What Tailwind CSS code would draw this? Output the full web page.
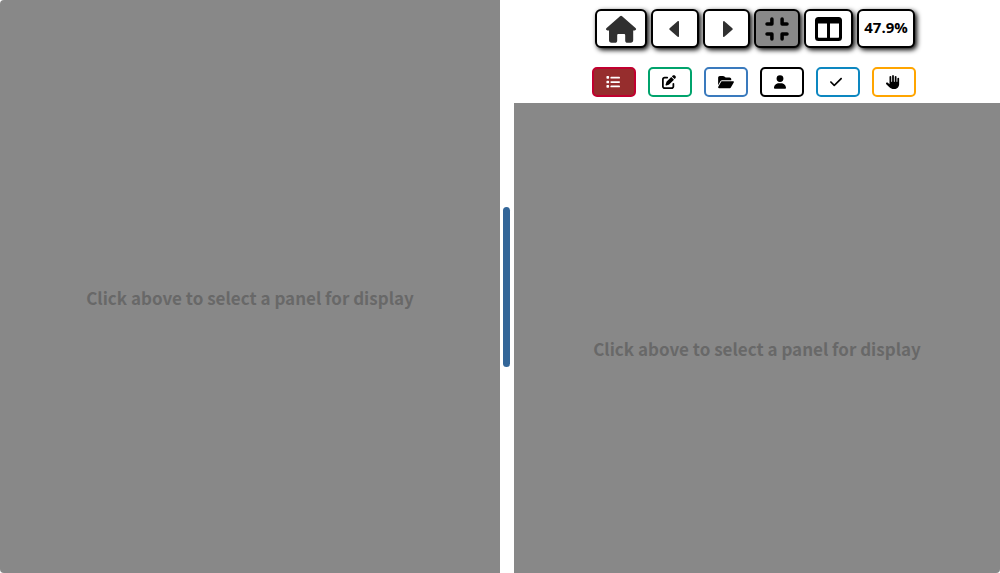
<!DOCTYPE html>
<html lang="en">
<head>
<meta charset="utf-8">
<meta name="viewport" content="width=device-width, initial-scale=1">
<title>Panels</title>
<script src="https://cdn.jsdelivr.net/npm/@tailwindcss/browser@4"></script>
</head>
<body class="h-screen overflow-hidden bg-white font-['Noto_Sans_CJK_SC',sans-serif] text-black">
<div class="flex h-full overflow-hidden rounded">
  <section class="flex w-1/2 shrink-0 items-center justify-center bg-[#888888] pt-[22px]">
    <p class="text-[17px] leading-6 font-bold text-[#686868]">Click above to select a panel for display</p>
  </section>
  <div role="separator" aria-orientation="vertical" aria-label="Resize panels" class="flex w-3.5 shrink-0 cursor-col-resize items-center justify-center bg-white pr-px">
    <div class="h-40 w-[7px] rounded-full bg-[#336699]"></div>
  </div>
  <main class="flex min-w-0 flex-1 flex-col">
    <header class="flex flex-col items-center gap-[19px] pt-[9px] pb-1.5">
      <nav aria-label="Navigation" class="flex h-[39px] gap-1 pr-1">
        <button aria-label="Home" class="flex w-[52px] items-center justify-center rounded-md border-2 border-black bg-white shadow-[2px_2px_5px_black]">
          <svg class="h-7 w-8" viewBox="0 0 32 28" fill="#303030"><path d="M15 1.200a1.600 1.600 0 0 1 2.100 0l13.400 11.900c1.200 1 .6 2.300-.8 2.300h-1.500V25c0 1.800-.9 2.700-2.600 2.700h-3.100c-1.500 0-2.300-.8-2.300-2.300v-4.900c0-.9-.5-1.400-1.400-1.400h-5.200c-.9 0-1.400.5-1.400 1.400v4.900c0 1.500-.8 2.300-2.300 2.300H6.600C4.900 27.700 4 26.800 4 25v-9.600H2.400C1 15.400.4 14.100 1.600 13.100Z"/></svg>
        </button>
        <button aria-label="Previous" class="flex w-12 items-center justify-center rounded-md border-2 border-black bg-white pr-1 shadow-[2px_2px_5px_black]">
          <svg class="h-5 w-[11px]" viewBox="0 0 12 20" fill="#303030"><path d="M10.200 1.700C11 1 12 1.400 12 2.500v15c0 1.100-1 1.500-1.800.8L1.800 10.900c-.6-.6-.6-1.200 0-1.800Z"/></svg>
        </button>
        <button aria-label="Next" class="flex w-[47px] items-center justify-center rounded-md border-2 border-black bg-white pl-1 shadow-[2px_2px_5px_black]">
          <svg class="h-5 w-[11px]" viewBox="0 0 12 20" fill="#303030"><path d="M1.800 1.700C1 1 0 1.400 0 2.500v15c0 1.100 1 1.500 1.800.8l8.400-7.400c.6-.6.6-1.200 0-1.800Z"/></svg>
        </button>
        <button aria-label="Exit full screen" aria-pressed="true" class="flex w-[46px] items-center justify-center rounded-md border-2 border-black bg-[#888888] shadow-[2px_2px_5px_black]">
          <svg class="size-6" viewBox="0 0 24 24" fill="none" stroke="#000" stroke-width="3.500" stroke-linecap="round" stroke-linejoin="round"><path d="M2 6.900h4.900V2M17.100 2v4.900H22M2 17.100h4.900V22M17.100 22v-4.900H22"/></svg>
        </button>
        <button aria-label="Split view" class="flex w-[49px] items-center justify-center rounded-md border-2 border-black bg-white shadow-[2px_2px_5px_black]">
          <svg class="h-6 w-[27px]" viewBox="0 0 27 24"><path fill="#000" fill-rule="evenodd" d="M3.500 0h20A3.500 3.500 0 0 1 27 3.500v17a3.500 3.500 0 0 1-3.500 3.500h-20A3.500 3.500 0 0 1 0 20.500v-17A3.500 3.500 0 0 1 3.500 0ZM3 6.500V20a.7.7 0 0 0 .7.700h8.300V6.500ZM15 6.500v14.200h8.300a.7.7 0 0 0 .7-.7V6.500Z"/></svg>
        </button>
        <button class="flex w-[58px] items-center justify-center rounded-md border-2 border-black bg-white pb-0.5 font-['Open_Sans',sans-serif] text-[15px] font-bold shadow-[2px_2px_5px_black]">47.9%</button>
      </nav>
      <nav aria-label="Panels" class="flex h-[30px] gap-3 pr-1.5">
        <button aria-label="Contents" aria-pressed="true" class="flex w-11 items-center justify-center rounded-[5px] border-2 border-[#c1002f] bg-[#962d2d] pr-0.5">
          <svg class="size-3.5" viewBox="0 0 512 512" fill="#fff"><path d="M24 40h64a24 24 0 0 1 24 24v48a24 24 0 0 1-24 24H40a24 24 0 0 1-24-24V64a24 24 0 0 1 24-24ZM192 64h288a32 32 0 0 1 0 64H192a32 32 0 0 1 0-64ZM192 224h288a32 32 0 0 1 0 64H192a32 32 0 0 1 0-64ZM192 384h288a32 32 0 0 1 0 64H192a32 32 0 0 1 0-64ZM40 208h48a24 24 0 0 1 24 24v48a24 24 0 0 1-24 24H40a24 24 0 0 1-24-24v-48a24 24 0 0 1 24-24ZM40 368h48a24 24 0 0 1 24 24v48a24 24 0 0 1-24 24H40a24 24 0 0 1-24-24v-48a24 24 0 0 1 24-24Z"/></svg>
        </button>
        <button aria-label="Edit" class="flex w-11 items-center justify-center rounded-[5px] border-2 border-[#00a36c] bg-white pr-0.5">
          <svg class="size-3.5" viewBox="0 0 512 512"><path d="M471.600 21.700c-21.900-21.900-57.300-21.900-79.200 0L362.300 51.700l97.900 97.900 30.100-30.100c21.900-21.900 21.900-57.300 0-79.200L471.600 21.700zm-299.200 220c-6.100 6.100-10.800 13.600-13.500 21.900l-29.600 88.800c-2.900 8.600-.6 18.100 5.800 24.600s15.900 8.700 24.600 5.800l88.800-29.600c8.200-2.700 15.700-7.400 21.900-13.500L437.700 172.300 339.700 74.300 172.400 241.700zM96 64C43 64 0 107 0 160V416c0 53 43 96 96 96H352c53 0 96-43 96-96V320c0-17.700-14.300-32-32-32s-32 14.300-32 32v96c0 17.700-14.300 32-32 32H96c-17.700 0-32-14.300-32-32V160c0-17.700 14.300-32 32-32h96c17.700 0 32-14.300 32-32s-14.300-32-32-32H96z"/></svg>
        </button>
        <button aria-label="Open" class="flex w-11 items-center justify-center rounded-[5px] border-2 border-[#3a7abd] bg-white">
          <svg class="h-3.5 w-4" viewBox="0 0 576 512"><path d="M88.700 223.800L0 375.800V96C0 60.700 28.700 32 64 32H181.500c17 0 33.300 6.700 45.300 18.700l26.500 26.500c12 12 28.300 18.700 45.300 18.700H416c35.300 0 64 28.700 64 64v32H144c-22.800 0-43.800 12.100-55.300 31.800zm27.600 16.100C122.100 230 132.600 224 144 224H544c11.500 0 22 6.100 27.700 16.100s5.700 22.200-.1 32.100l-112 192C453.900 474 443.400 480 432 480H32c-11.500 0-22-6.100-27.700-16.100s-5.700-22.200 .1-32.100l112-192z"/></svg>
        </button>
        <button aria-label="User" class="flex w-11 items-center justify-center rounded-[5px] border-2 border-black bg-white pr-1">
          <svg class="h-3.5 w-3" viewBox="0 0 448 512"><path d="M224 256A128 128 0 1 0 224 0a128 128 0 1 0 0 256zm-45.700 48C79.800 304 0 383.800 0 482.300C0 498.700 13.300 512 29.700 512H418.300c16.400 0 29.700-13.300 29.700-29.700C448 383.800 368.200 304 269.700 304H178.300z"/></svg>
        </button>
        <button aria-label="Check" class="flex w-11 items-center justify-center rounded-[5px] border-2 border-[#0d87c0] bg-white pr-1">
          <svg class="h-3.5 w-3" viewBox="0 0 448 512"><path d="M438.600 105.400c12.500 12.500 12.500 32.800 0 45.300l-256 256c-12.500 12.500-32.800 12.500-45.300 0l-128-128c-12.500-12.500-12.500-32.800 0-45.300s32.800-12.500 45.300 0L160 338.700 393.400 105.400c12.500-12.500 32.800-12.500 45.300 0z"/></svg>
        </button>
        <button aria-label="Raise hand" class="flex w-11 items-center justify-center rounded-[5px] border-2 border-[#ffa500] bg-white pr-0.5">
          <svg class="size-3.5" viewBox="0 0 512 512"><path d="M288 32c0-17.700-14.300-32-32-32s-32 14.300-32 32V240c0 8.800-7.200 16-16 16s-16-7.200-16-16V64c0-17.700-14.300-32-32-32s-32 14.300-32 32V336c0 1.500 0 3.100 .1 4.600L67.600 283c-16-15.200-41.300-14.600-56.600 1.400s-14.600 41.300 1.400 56.600L124.800 448c43.100 41.100 100.400 64 160 64H304c97.200 0 176-78.800 176-176V128c0-17.700-14.300-32-32-32s-32 14.300-32 32V240c0 8.800-7.200 16-16 16s-16-7.200-16-16V64c0-17.700-14.300-32-32-32s-32 14.300-32 32V240c0 8.800-7.200 16-16 16s-16-7.200-16-16V32z"/></svg>
        </button>
      </nav>
    </header>
    <section class="flex flex-1 items-center justify-center bg-[#888888] pt-[22px]">
      <p class="text-[17px] leading-6 font-bold text-[#686868]">Click above to select a panel for display</p>
    </section>
  </main>
</div>
</body>
</html>
